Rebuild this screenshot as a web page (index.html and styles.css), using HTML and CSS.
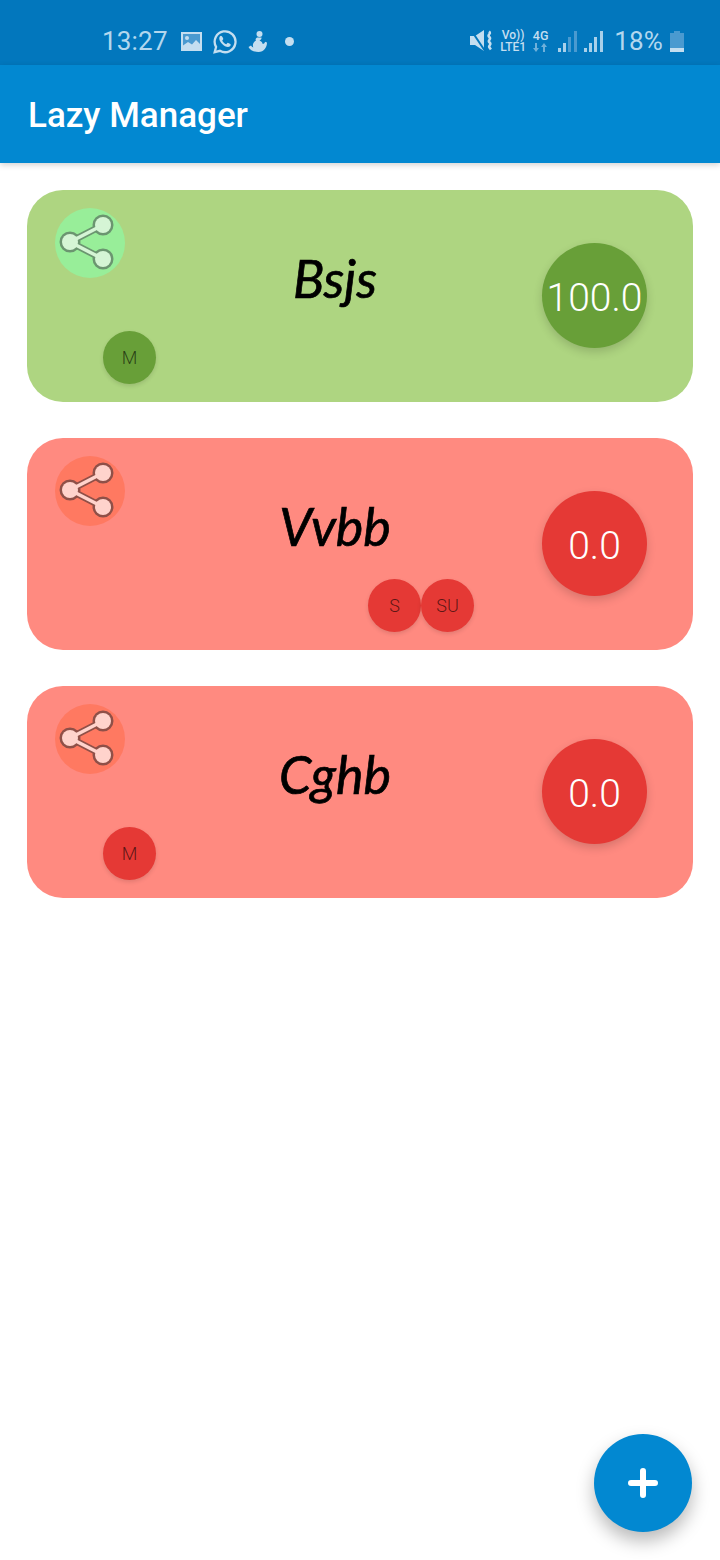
FILE: index.html
```html
<!DOCTYPE html>
<html lang="en">
<head>
<meta charset="utf-8">
<title>Lazy Manager</title>
<link rel="stylesheet" href="styles.css">
</head>
<body>
<div class="phone">
  <header class="status">
    <div class="status-left">
      <span class="time">13:27</span>
      <svg class="ic-image" viewBox="0 0 21 19"><path class="img-inner" d="M0 0h21v19H0z"/><path d="M0 0h21v19H0zM2 2v15h17V2z" fill-rule="evenodd"/><circle cx="6" cy="6" r="2"/><path d="M2 17v-3.500l5-3.500 4 2.500 4-4.500 4 4V17z"/></svg>
      <svg class="ic-wa" viewBox="0 0 24 24"><path class="wa-ring" d="M2.600 22.200l1.300-5A10 10 0 1 1 7.600 20.900z"/><path d="M8.600 6.400c-.6 0-1.600.9-1.600 2.600 0 3.400 4.800 8.200 8.300 8.200 1.700 0 2.700-1.100 2.700-2.200 0-.5-2.500-1.700-2.900-1.700-.4 0-1 1.300-1.500 1.300-1.100 0-3.700-2.500-3.700-3.500 0-.5 1-1.100 1-1.500C10.900 9.200 9.800 6.400 8.600 6.400z"/></svg>
      <svg class="ic-fig" viewBox="0 0 19 21"><circle cx="11.500" cy="3" r="3"/><path d="M9 6.500h4.500c.3 1.500-.8 2.500-2 3 2 .8 3 2.200 3.200 3.500 1.300-.2 2.300-1 2.300-2.200l2 .7c0 4.500-3 9.500-8.500 9.500-4.500 0-8.500-1.800-10-5l2.500-1.500c.6 1 1.300 1.700 2.300 2-1-2.500-.3-5.300 2.700-7-.8-1-.5-2 1-3z"/></svg>
      <span class="dot"></span>
    </div>
    <div class="status-right">
      <svg class="ic-mute" viewBox="0 0 23 22"><path d="M0 6h5l9-6v21l-9-6H0z"/><path class="cut" d="M1 0l14 21"/><path class="line" d="M19 1.500c3 2.500-2.500 3 .3 5.500s-2.500 3 .3 5.500-2.500 3 .3 5.500l1 1.500"/></svg>
      <div class="volte"><span>Vo))</span><span>LTE1</span></div>
      <div class="net">
        <span>4G</span>
        <svg class="ic-arrows" viewBox="0 0 15 9"><path d="M3 9L0 5h2V0h2v5h2zM11 0l3 4h-2v5h-2V4H8z"/></svg>
      </div>
      <svg class="ic-signal" viewBox="0 0 19 21"><path d="M0 17h3v4H0z"/><path d="M5 12h3v9H5z"/><path class="faint" d="M10 6h3v15h-3zM16 0h3v21h-3z"/></svg>
      <svg class="ic-signal" viewBox="0 0 19 21"><path d="M0 17h3v4H0zM5 12h3v9H5zM10 6h3v15h-3zM16 0h3v21h-3z"/></svg>
      <span class="pct">18%</span>
      <svg class="ic-batt" viewBox="0 0 14 21"><path class="faint" d="M4 0h6v2h4v15H0V2h4z"/><path d="M0 17h14v4H0z"/></svg>
    </div>
  </header>

  <div class="appbar"><h1>Lazy Manager</h1></div>

  <main class="list">
    <article class="card good">
      <button class="share"><svg viewBox="0 0 70 70"><g class="s-dark"><path d="M48 17L15 34l33 17"/><circle cx="48" cy="17" r="9"/><circle cx="15" cy="34" r="9"/><circle cx="48" cy="51" r="9"/></g><g class="s-light"><path d="M48 17L15 34l33 17"/><circle cx="48" cy="17" r="8"/><circle cx="15" cy="34" r="8"/><circle cx="48" cy="51" r="8"/></g></svg></button>
      <h2 class="title">Bsjs</h2>
      <div class="score">100.0</div>
      <div class="days">
        <span class="chip">M</span>
      </div>
    </article>

    <article class="card bad">
      <button class="share"><svg viewBox="0 0 70 70"><g class="s-dark"><path d="M48 17L15 34l33 17"/><circle cx="48" cy="17" r="9"/><circle cx="15" cy="34" r="9"/><circle cx="48" cy="51" r="9"/></g><g class="s-light"><path d="M48 17L15 34l33 17"/><circle cx="48" cy="17" r="8"/><circle cx="15" cy="34" r="8"/><circle cx="48" cy="51" r="8"/></g></svg></button>
      <h2 class="title">Vvbb</h2>
      <div class="score">0.0</div>
      <div class="days">
        <span class="slot"></span><span class="slot"></span><span class="slot"></span><span class="slot"></span><span class="slot"></span>
        <span class="chip">S</span>
        <span class="chip">SU</span>
      </div>
    </article>

    <article class="card bad">
      <button class="share"><svg viewBox="0 0 70 70"><g class="s-dark"><path d="M48 17L15 34l33 17"/><circle cx="48" cy="17" r="9"/><circle cx="15" cy="34" r="9"/><circle cx="48" cy="51" r="9"/></g><g class="s-light"><path d="M48 17L15 34l33 17"/><circle cx="48" cy="17" r="8"/><circle cx="15" cy="34" r="8"/><circle cx="48" cy="51" r="8"/></g></svg></button>
      <h2 class="title">Cghb</h2>
      <div class="score">0.0</div>
      <div class="days">
        <span class="chip">M</span>
      </div>
    </article>
  </main>

  <button class="fab"><svg viewBox="0 0 30 30"><path d="M15 3v24M3 15h24"/></svg></button>
</div>
</body>
</html>
```
FILE: styles.css
```css
* { box-sizing: border-box; }
html, body { margin: 0; padding: 0; background: #fff; }
body { font-family: Roboto, "Liberation Sans", sans-serif; }
.phone { position: relative; width: 720px; height: 1560px; overflow: hidden; background: #fff; }

.status {
  height: 65px; background: #0277bd; color: #b3d7ee; fill: #c4def0;
  display: flex; justify-content: space-between; align-items: center;
  padding: 17px 36px 0 102px;
}
.status-left, .status-right { display: flex; align-items: center; }
.time { font-size: 26px; letter-spacing: .2px; width: 79px; }
.ic-image { width: 21px; height: 19px; margin-right: 10px; }
.img-inner { fill: #4a9ad0; }
.ic-wa { width: 25px; height: 25px; margin-right: 11px; }
.wa-ring { fill: none; stroke: #c4def0; stroke-width: 2.200; }
.ic-fig { width: 19px; height: 21px; margin-right: 18px; }
.dot { width: 9px; height: 9px; border-radius: 50%; background: #c4def0; }

.ic-mute { width: 23px; height: 22px; margin-right: 6px; }
.ic-mute .line { fill: none; stroke: #c4def0; stroke-width: 2.500; }
.ic-mute .cut { fill: none; stroke: #0277bd; stroke-width: 2; }
.volte, .net { display: flex; flex-direction: column; align-items: center; font-weight: 500; color: #c4def0; }
.volte { font-size: 12px; line-height: 12px; width: 28px; margin-right: 5px; }
.net { font-size: 12.500px; line-height: 12px; width: 17px; margin-right: 9px; }
.ic-arrows { width: 15px; height: 9px; fill: #6fb0da; margin-top: 1px; }
.ic-signal { width: 19px; height: 21px; fill: #a9d0ea; margin-right: 7px; }
.faint { fill: #4a9ad0; }
.pct { font-size: 26px; margin: 0 7px 0 4px; letter-spacing: .2px; }
.ic-batt { width: 14px; height: 21px; fill: #c4def0; }

.appbar {
  height: 98px; background: #0288d1; padding: 0 28px;
  display: flex; align-items: center;
  box-shadow: 0 2px 6px rgba(0,0,0,.18);
  position: relative;
}
.appbar h1 { margin: 2px 0 0; font-size: 35px; font-weight: 500; color: #fff; }

.list { display: flex; flex-direction: column; gap: 36px; padding: 27px 27px 0; }
.card {
  height: 212px; border-radius: 36px; padding: 18px 46px 18px 28px;
  display: grid; grid-template-columns: 70px 1fr 105px; grid-template-rows: 70px 1fr;
}
.good { background: #aed581; --accent: #689f38; --halo: #98ee99; --sd: #6b9570; --sl: #d5f5d5; }
.bad { background: #ff8a80; --accent: #e53935; --halo: #ff7961; --sd: #8f5048; --sl: #ffd3cc; }

.share {
  grid-column: 1; grid-row: 1; width: 70px; height: 70px; padding: 0; border: 0;
  border-radius: 50%; background: var(--halo);
}
.share svg { display: block; width: 70px; height: 70px; }
.s-dark path { fill: none; stroke: var(--sd); stroke-width: 7; }
.s-dark circle { fill: var(--sd); stroke: var(--sd); stroke-width: 3; }
.s-light path { fill: none; stroke: var(--sl); stroke-width: 3.500; }
.s-light circle { fill: var(--sl); }

.title {
  grid-column: 2; grid-row: 1; margin: 40px 0 0 3px; text-align: center;
  font-family: Lato, "Open Sans", sans-serif; font-style: italic; font-weight: 400;
  font-size: 52px; line-height: 60px; color: #000; white-space: nowrap;
  -webkit-text-stroke: .7px #000;
}
.score {
  grid-column: 3; grid-row: 1 / 3; align-self: center; margin-top: -1px; padding-top: 4px;
  width: 105px; height: 105px; border-radius: 50%;
  background: var(--accent); color: #fff;
  display: flex; align-items: center; justify-content: center;
  font-size: 39px; font-weight: 300;
  box-shadow: 0 4px 10px rgba(0,0,0,.16);
}
.days { grid-column: 1 / 3; grid-row: 2; align-self: end; display: flex; margin-left: 48px; }
.chip, .slot { width: 53px; height: 53px; flex: none; }
.chip {
  border-radius: 50%; background: var(--accent);
  display: flex; align-items: center; justify-content: center;
  font-size: 18px; font-weight: 300; color: rgba(0,0,0,.62);
  box-shadow: 0 2px 4px rgba(0,0,0,.12);
}

.fab {
  position: absolute; left: 594px; top: 1434px; width: 98px; height: 98px; padding: 0; border: 0;
  border-radius: 50%; background: #0288d1;
  display: flex; align-items: center; justify-content: center;
  box-shadow: 0 9px 18px rgba(0,0,0,.28);
}
.fab svg { width: 30px; height: 30px; }
.fab path { fill: none; stroke: #fff; stroke-width: 6; stroke-linecap: round; }
```
